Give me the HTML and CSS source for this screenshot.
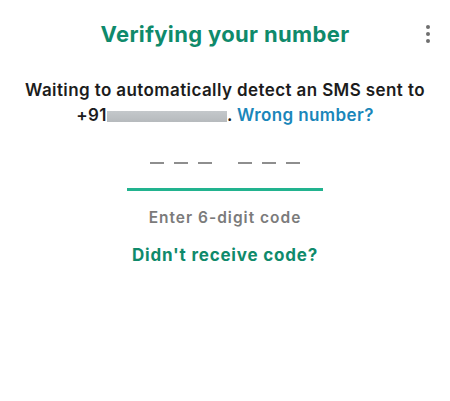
FILE: index.html
```html
<!DOCTYPE html>
<html lang="en">
<head>
    <meta charset="UTF-8">
    <meta name="viewport" content="width=device-width, initial-scale=1.0">
    <title>Verifying your number</title>
    <link rel="stylesheet" href="styles.css">
</head>
<body>
    <div id="app">
        <header class="top-bar">
            <span></span>
            <h1>Verifying your number</h1>
            <button class="menu-button" aria-label="More options">
                <span class="dot"></span>
                <span class="dot"></span>
                <span class="dot"></span>
            </button>
        </header>

        <p class="intro">
            Waiting to automatically detect an SMS sent to<br>
            +91<span class="hidden-number"></span>. <a href="#" class="link-blue">Wrong number?</a>
        </p>

        <div class="code-input">
            <div class="dash-group">
                <span class="dash"></span>
                <span class="dash"></span>
                <span class="dash"></span>
            </div>
            <div class="dash-group">
                <span class="dash"></span>
                <span class="dash"></span>
                <span class="dash"></span>
            </div>
        </div>

        <p class="hint">Enter 6-digit code</p>
        <a href="#" class="resend">Didn't receive code?</a>
    </div>
</body>
</html>
```

FILE: styles.css
```css
body, html {
    margin: 0;
    padding: 0;
    background-color: #ffffff;
    font-family: Inter, "Noto Sans", sans-serif;
}
#app {
    display: flex;
    flex-direction: column;
    align-items: center;
    height: 401px;
}
.top-bar {
    display: grid;
    grid-template-columns: 1fr auto 1fr;
    align-items: center;
    width: 100%;
    box-sizing: border-box;
    padding: 19px 20px 0 20px;
}
h1 {
    margin: 0;
    font-size: 22px;
    font-weight: 700;
    letter-spacing: 0.35px;
    color: #0f8a6b;
    line-height: 30px;
}
.menu-button {
    justify-self: end;
    display: flex;
    flex-direction: column;
    gap: 3px;
    padding: 0;
    background: none;
    border: none;
    cursor: pointer;
}
.dot {
    width: 4px;
    height: 4px;
    border-radius: 50%;
    background-color: #6f6f6f;
}
.intro {
    margin: 29px 0 0 0;
    font-size: 17px;
    font-weight: 600;
    letter-spacing: 0.4px;
    line-height: 25px;
    color: #1c1c1c;
    text-align: center;
}
.hidden-number {
    display: inline-block;
    width: 120px;
    height: 11px;
    vertical-align: -1px;
    background: linear-gradient(#c4c8cb, #b6babd);
}
.link-blue {
    color: #1a86ba;
    text-decoration: none;
}
.code-input {
    display: flex;
    justify-content: center;
    gap: 26px;
    width: 196px;
    margin-top: 34px;
    padding-bottom: 24px;
    border-bottom: 3px solid #22b38f;
}
.dash-group {
    display: flex;
    gap: 10px;
}
.dash {
    width: 14px;
    height: 2px;
    background-color: #8e8e8e;
}
.hint {
    margin: 17px 0 0 0;
    font-size: 15.5px;
    font-weight: 600;
    letter-spacing: 1px;
    color: #7b7b7b;
}
.resend {
    margin-top: 18px;
    font-size: 17px;
    font-weight: 700;
    letter-spacing: 0.8px;
    color: #0f8a6b;
    text-decoration: none;
}
```
